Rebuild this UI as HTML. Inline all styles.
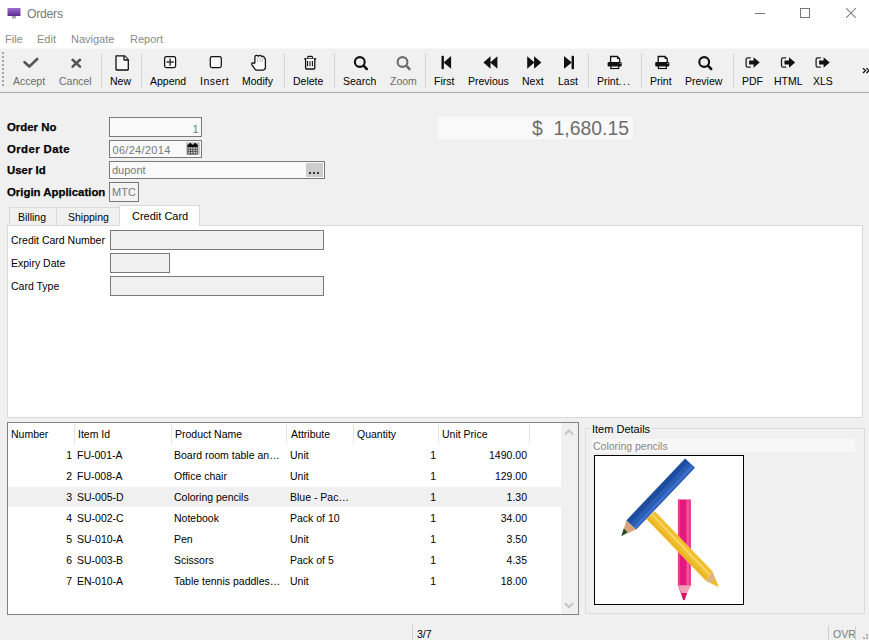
<!DOCTYPE html>
<html><head><meta charset="utf-8">
<style>
*{margin:0;padding:0;box-sizing:border-box}
html,body{width:869px;height:640px;overflow:hidden;background:#f0f0f0;font-family:"Liberation Sans",sans-serif;font-size:11px;color:#000}
.a{position:absolute;white-space:nowrap}
#title{position:absolute;left:0;top:0;width:869px;height:30px;background:#fff}
#menu{position:absolute;left:0;top:30px;width:869px;height:18px;background:#fff}
#tb{position:absolute;left:0;top:48px;width:869px;height:44px;background:#f0f0f0;border-top:1px solid #f8f8f8}
#tbline{position:absolute;left:0;top:92px;width:869px;height:1px;background:#a9a9a9}
.sep{position:absolute;top:53px;width:1px;height:35px;background:#d6d6d6}
.lbl{position:absolute;top:75px;font-size:10.5px;white-space:nowrap;color:#000}
.dis{color:#6d6d6d}
.ic{position:absolute}
.blbl{position:absolute;font-weight:bold;font-size:11.4px;white-space:nowrap;-webkit-text-stroke:0.25px #000}
.inp{position:absolute;background:#f9f9f9;border:1px solid #7a7a7a}
.gtext{color:#7a7a7a;font-size:11px;position:absolute;white-space:nowrap}
.hdr{position:absolute;top:428px;font-size:10.5px;white-space:nowrap}
.hsep{position:absolute;top:424px;width:1px;height:20px;background:#e5e5e5}
.cell{position:absolute;font-size:10.5px;white-space:nowrap}
</style></head><body>
<!-- title bar -->
<div id="title"></div>
<svg class="ic" style="left:7px;top:7px" width="14" height="12" viewBox="0 0 14 12">
<defs><linearGradient id="mon" x1="0" y1="0" x2="0" y2="1"><stop offset="0" stop-color="#9d6fd0"/><stop offset="1" stop-color="#5a2d8c"/></linearGradient></defs>
<rect x="0.5" y="1" width="13" height="8" fill="url(#mon)"/>
<rect x="5" y="9" width="4" height="2.5" fill="#a8a8a8"/>
</svg>
<div class="a" style="left:27px;top:7px;font-size:12.2px;letter-spacing:-0.25px;color:#7a7a7a">Orders</div>
<div class="a" style="left:755px;top:13px;width:10px;height:1px;background:#777"></div>
<div class="a" style="left:800px;top:8px;width:10px;height:10px;border:1px solid #777"></div>
<svg class="ic" style="left:846px;top:8px" width="10" height="10" viewBox="0 0 10 10"><path d="M0 0L10 10M10 0L0 10" stroke="#808080" stroke-width="1.1"/></svg>
<!-- menu -->
<div id="menu"></div>
<div class="a" style="left:5px;top:33px;font-size:11px;color:#8a8a8a">File</div>
<div class="a" style="left:37px;top:33px;font-size:11px;color:#8a8a8a">Edit</div>
<div class="a" style="left:71px;top:33px;font-size:11px;color:#8a8a8a">Navigate</div>
<div class="a" style="left:130px;top:33px;font-size:11px;color:#8a8a8a">Report</div>
<!-- toolbar -->
<div id="tb"></div>
<div id="tbline"></div>
<div class="a" style="left:2px;top:52px;width:2px;height:36px;background:repeating-linear-gradient(to bottom,#a8a8a8 0 2px,transparent 2px 4px)"></div>
<div class="sep" style="left:101px"></div>
<div class="sep" style="left:141px"></div>
<div class="sep" style="left:284px"></div>
<div class="sep" style="left:334px"></div>
<div class="sep" style="left:425px"></div>
<div class="sep" style="left:588px"></div>
<div class="sep" style="left:641px"></div>
<div class="sep" style="left:733px"></div>

<div class="lbl dis" style="left:13px">Accept</div>
<div class="lbl dis" style="left:59px">Cancel</div>
<div class="lbl" style="left:110px">New</div>
<div class="lbl" style="left:150px">Append</div>
<div class="lbl" style="left:200px;letter-spacing:0.5px">Insert</div>
<div class="lbl" style="left:242px">Modify</div>
<div class="lbl" style="left:293px">Delete</div>
<div class="lbl" style="left:343px">Search</div>
<div class="lbl dis" style="left:390px">Zoom</div>
<div class="lbl" style="left:434px">First</div>
<div class="lbl" style="left:468px">Previous</div>
<div class="lbl" style="left:522px">Next</div>
<div class="lbl" style="left:558px">Last</div>
<div class="lbl" style="left:597px">Print<span style="letter-spacing:1.3px">...</span></div>
<div class="lbl" style="left:650px">Print</div>
<div class="lbl" style="left:685px">Preview</div>
<div class="lbl" style="left:742px">PDF</div>
<div class="lbl" style="left:774px">HTML</div>
<div class="lbl" style="left:813px">XLS</div>

<!-- icons -->
<svg class="ic" style="left:0;top:0" width="869" height="100" viewBox="0 0 869 100">
<g fill="none" stroke-linecap="round" stroke-linejoin="round">
<path d="M24.6 62.2L29.3 66.6L37.2 59" stroke="#555" stroke-width="2.7"/>
<path d="M72.6 59.8L80 66.6M80 59.8L72.6 66.6" stroke="#555" stroke-width="2.6"/>
</g>
<path d="M116 55.8H124.4L128.3 59.7V69.6Q128.3 70 127.9 70H116.4Q116 70 116 69.6Z" fill="#f6f6f6" stroke="#111" stroke-width="1.3" stroke-linejoin="round"/>
<path d="M124 56V59.4Q124 60 124.6 60H128.2" fill="#fff" stroke="#111" stroke-width="1.3"/>
<rect x="164.6" y="56.6" width="11" height="11" rx="1.8" fill="#fafafa" stroke="#111" stroke-width="1.25"/>
<path d="M170.1 58.4V65.8M166.4 62.1H173.8" stroke="#333" stroke-width="1.5"/>
<rect x="210.3" y="56.6" width="11" height="11" rx="1.8" fill="#fafafa" stroke="#111" stroke-width="1.25"/>
<g transform="translate(248,52)">
<path d="M6.9 11V5.2Q6.9 3.4 8.6 3.4Q9.9 3.4 10.2 4.4Q10.6 3.3 11.9 3.3Q13.3 3.3 13.6 4.6Q14 4.2 14.8 4.2Q16.2 4.2 16.3 6Q17.4 6 17.4 7.5V15.6Q17.4 18 15 18H8.6Q7.6 18 7.1 17.3L3.8 12.6Q3.2 11.3 4.4 10.9Q5.7 10.6 6.9 11.8" fill="#fafafa" stroke="#111" stroke-width="1.25" stroke-linejoin="round"/>
<path d="M9.6 4.5V10M12 4.5V10M14.3 5.2V10" stroke="#bbb" stroke-width="0.9"/>
</g>
<g transform="translate(300,52)">
<rect x="7.6" y="4.4" width="5" height="2.2" rx="1.1" fill="none" stroke="#111" stroke-width="1.1"/>
<path d="M4.2 6.8H16.2" stroke="#111" stroke-width="1.4"/>
<path d="M5.6 6.8V16.2Q5.6 17 6.4 17H14Q14.8 17 14.8 16.2V6.8" fill="#fafafa" stroke="#111" stroke-width="1.3"/>
<path d="M7.6 9V14.3M12.4 9V14.3" stroke="#111" stroke-width="1.1"/>
<path d="M10 9V14.3" stroke="#555" stroke-width="1.4"/>
</g>
<g transform="translate(350,52)" fill="none" stroke="#111"><circle cx="9.8" cy="10" r="4.9" stroke-width="2.1"/><path d="M13.5 13.7L16.8 17" stroke-width="2.5" stroke-linecap="round"/></g>
<g transform="translate(392.7,52)" fill="none" stroke="#6d6d6d"><circle cx="9.8" cy="10" r="4.9" stroke-width="2.1"/><path d="M13.5 13.7L16.8 17" stroke-width="2.5" stroke-linecap="round"/></g>
<g transform="translate(694.4,52)" fill="none" stroke="#111"><circle cx="9.8" cy="10" r="4.9" stroke-width="2.1"/><path d="M13.5 13.7L16.8 17" stroke-width="2.5" stroke-linecap="round"/></g>
<g fill="#111">
<rect x="441.5" y="55.8" width="2.4" height="13.4" rx="0.8"/>
<path d="M443.6 62.4L451.1 56V68.8Z"/>
<path d="M483.4 62.4L490.5 56.2V68.8Z M490.2 62.4L497.4 56.2V68.8Z"/>
<path d="M527.2 56.2L534.4 62.4L527.2 68.8Z M534.1 56.2L541.4 62.4L534.1 68.8Z"/>
<path d="M564 56L571.8 62.4L564 68.8Z"/>
<rect x="571.6" y="55.8" width="2.4" height="13.4" rx="0.8"/>
</g>
<g transform="translate(603,52)">
<path d="M7.6 10.5V4.5H14.3L16.6 6.8V10.5" fill="#fafafa" stroke="#111" stroke-width="1.3"/>
<path d="M14 4.4V7.1H16.7Z" fill="#111"/>
<rect x="4.6" y="10.1" width="14.1" height="4.3" rx="1" fill="#111"/>
<circle cx="17.2" cy="11.4" r="0.6" fill="#bbb"/>
<rect x="7.8" y="13.9" width="7.9" height="2.6" fill="#fafafa" stroke="#111" stroke-width="1.2"/>
</g>
<g transform="translate(650.6,52)">
<path d="M7.6 10.5V4.5H14.3L16.6 6.8V10.5" fill="#fafafa" stroke="#111" stroke-width="1.3"/>
<path d="M14 4.4V7.1H16.7Z" fill="#111"/>
<rect x="4.6" y="10.1" width="14.1" height="4.3" rx="1" fill="#111"/>
<circle cx="17.2" cy="11.4" r="0.6" fill="#bbb"/>
<rect x="7.8" y="13.9" width="7.9" height="2.6" fill="#fafafa" stroke="#111" stroke-width="1.2"/>
</g>
<g id="exp" transform="translate(741,52)">
<path d="M9.8 5.8H6.8Q5.1 5.8 5.1 7.5V13.5Q5.1 15.2 6.8 15.2H9.8" fill="none" stroke="#222" stroke-width="1.3"/>
<path d="M8.1 8.4H12.6V5.2L18.7 10.4L12.6 15.8V12.5H8.1Z" fill="#111"/>
</g>
<g transform="translate(776.4,52)">
<path d="M9.8 5.8H6.8Q5.1 5.8 5.1 7.5V13.5Q5.1 15.2 6.8 15.2H9.8" fill="none" stroke="#222" stroke-width="1.3"/>
<path d="M8.1 8.4H12.6V5.2L18.7 10.4L12.6 15.8V12.5H8.1Z" fill="#111"/>
</g>
<g transform="translate(811,52)">
<path d="M9.8 5.8H6.8Q5.1 5.8 5.1 7.5V13.5Q5.1 15.2 6.8 15.2H9.8" fill="none" stroke="#222" stroke-width="1.3"/>
<path d="M8.1 8.4H12.6V5.2L18.7 10.4L12.6 15.8V12.5H8.1Z" fill="#111"/>
</g>
<path d="M863 68.3L865.5 70.6L863 72.9M866.5 68.3L869 70.6L866.5 72.9" fill="none" stroke="#111" stroke-width="1.3"/>
</svg>

<!-- form -->
<div class="blbl" style="left:7px;top:121px">Order No</div>
<div class="blbl" style="left:7px;top:142.6px;letter-spacing:0.4px">Order Date</div>
<div class="blbl" style="left:7px;top:164px">User Id</div>
<div class="blbl" style="left:7px;top:186px">Origin Application</div>

<div class="inp" style="left:109px;top:117px;width:93px;height:20px"></div>
<div class="gtext" style="left:192.5px;top:122.5px">1</div>
<div class="inp" style="left:109px;top:140px;width:93px;height:18px"></div>
<div class="gtext" style="left:112.5px;top:144px;letter-spacing:0.3px">06/24/2014</div>
<svg class="ic" style="left:183px;top:139px" width="20" height="20" viewBox="0 0 20 20">
<rect x="3.1" y="3.1" width="13.8" height="12.5" fill="#c6c6c6"/>
<rect x="4.5" y="5.8" width="10.3" height="9.6" rx="0.6" fill="#2e2e2e"/>
<rect x="4.5" y="5.6" width="10.3" height="2" fill="#000"/>
<circle cx="7.3" cy="5.2" r="1.2" fill="#000"/><circle cx="12.2" cy="5.2" r="1.2" fill="#000"/>
<rect x="5.4" y="8.3" width="1.7" height="1.7" fill="#cfcfcf"/><rect x="7.8" y="8.3" width="1.7" height="1.7" fill="#cfcfcf"/><rect x="10.2" y="8.3" width="1.7" height="1.7" fill="#cfcfcf"/><rect x="12.6" y="8.3" width="1.7" height="1.7" fill="#cfcfcf"/><rect x="5.4" y="10.6" width="1.7" height="1.7" fill="#cfcfcf"/><rect x="7.8" y="10.6" width="1.7" height="1.7" fill="#cfcfcf"/><rect x="10.2" y="10.6" width="1.7" height="1.7" fill="#cfcfcf"/><rect x="12.6" y="10.6" width="1.7" height="1.7" fill="#cfcfcf"/><rect x="5.4" y="12.9" width="1.7" height="1.7" fill="#cfcfcf"/><rect x="7.8" y="12.9" width="1.7" height="1.7" fill="#cfcfcf"/><rect x="10.2" y="12.9" width="1.7" height="1.7" fill="#cfcfcf"/><rect x="12.6" y="12.9" width="1.7" height="1.7" fill="#cfcfcf"/>
</svg>
<div class="inp" style="left:109px;top:161px;width:216px;height:18px"></div>
<div class="gtext" style="left:112px;top:164px">dupont</div>
<div class="a" style="left:306px;top:163px;width:17px;height:14px;background:#cdcdcd"></div>
<div class="a" style="left:309px;top:172px;width:2px;height:2px;background:#333;box-shadow:4px 0 #333,8px 0 #333"></div>
<div class="inp" style="left:109px;top:182px;width:30px;height:20px;background:#f3f3f3"></div>
<div class="gtext" style="left:112px;top:186px">MTC</div>

<div class="a" style="left:438px;top:117px;width:195px;height:22px;background:#f9f9f9"></div>
<div class="a" style="left:532px;top:116.7px;font-size:19.4px;color:#6d6d6d">$&nbsp; 1,680.15</div>

<!-- tabs -->
<div class="a" style="left:7px;top:225px;width:856px;height:193px;background:#fff;border:1px solid #d9d9d9"></div>
<div class="a" style="left:9px;top:207px;width:48px;height:18px;background:#f0f0f0;border:1px solid #d9d9d9;border-bottom:none"></div>
<div class="a" style="left:56px;top:207px;width:64px;height:18px;background:#f0f0f0;border:1px solid #d9d9d9;border-bottom:none"></div>
<div class="a" style="left:119px;top:205px;width:81px;height:21px;background:#fff;border:1px solid #d9d9d9;border-bottom:none"></div>
<div class="a" style="left:18px;top:211px;font-size:10.5px">Billing</div>
<div class="a" style="left:68px;top:211px;font-size:10.5px">Shipping</div>
<div class="a" style="left:132px;top:210px;font-size:11px">Credit Card</div>

<div class="a" style="left:11px;top:234px;font-size:10.5px">Credit Card Number</div>
<div class="a" style="left:11px;top:257px;font-size:10.5px">Expiry Date</div>
<div class="a" style="left:11px;top:280px;font-size:10.5px">Card Type</div>
<div class="inp" style="left:110px;top:230px;width:214px;height:20px;background:#f0f0f0"></div>
<div class="inp" style="left:110px;top:253px;width:60px;height:20px;background:#f0f0f0"></div>
<div class="inp" style="left:110px;top:276px;width:214px;height:20px;background:#f0f0f0"></div>

<!-- table -->
<div class="a" style="left:7px;top:422px;width:572px;height:193px;background:#fff;border:1px solid #828282"></div>
<div class="a" style="left:561px;top:423px;width:17px;height:191px;background:#f0f0f0"></div>
<svg class="ic" style="left:563px;top:427px" width="12" height="10" viewBox="0 0 12 10"><path d="M2 7.5L6 3.5L10 7.5" fill="none" stroke="#c4c4c4" stroke-width="2"/></svg>
<svg class="ic" style="left:563px;top:600px" width="12" height="10" viewBox="0 0 12 10"><path d="M2 3.2L6 7.2L10 3.2" fill="none" stroke="#c4c4c4" stroke-width="2"/></svg>
<div class="hsep" style="left:74px"></div>
<div class="hsep" style="left:171px"></div>
<div class="hsep" style="left:286px"></div>
<div class="hsep" style="left:353px"></div>
<div class="hsep" style="left:438px"></div>
<div class="hsep" style="left:529px"></div>
<div class="hdr" style="left:11px">Number</div>
<div class="hdr" style="left:78px">Item Id</div>
<div class="hdr" style="left:175px">Product Name</div>
<div class="hdr" style="left:291px">Attribute</div>
<div class="hdr" style="left:357px">Quantity</div>
<div class="hdr" style="left:442px">Unit Price</div>
<div class="a" style="left:8px;top:487px;width:553px;height:20px;background:#f0f0f0"></div>
<div class="cell" style="right:797px;top:449px">1</div>
<div class="cell" style="left:77px;top:449px">FU-001-A</div>
<div class="cell" style="left:174px;top:449px">Board room table an…</div>
<div class="cell" style="left:290px;top:449px">Unit</div>
<div class="cell" style="right:433px;top:449px">1</div>
<div class="cell" style="right:342px;top:449px">1490.00</div>
<div class="cell" style="right:797px;top:470px">2</div>
<div class="cell" style="left:77px;top:470px">FU-008-A</div>
<div class="cell" style="left:174px;top:470px">Office chair</div>
<div class="cell" style="left:290px;top:470px">Unit</div>
<div class="cell" style="right:433px;top:470px">1</div>
<div class="cell" style="right:342px;top:470px">129.00</div>
<div class="cell" style="right:797px;top:491px">3</div>
<div class="cell" style="left:77px;top:491px">SU-005-D</div>
<div class="cell" style="left:174px;top:491px">Coloring pencils</div>
<div class="cell" style="left:290px;top:491px">Blue - Pac…</div>
<div class="cell" style="right:433px;top:491px">1</div>
<div class="cell" style="right:342px;top:491px">1.30</div>
<div class="cell" style="right:797px;top:512px">4</div>
<div class="cell" style="left:77px;top:512px">SU-002-C</div>
<div class="cell" style="left:174px;top:512px">Notebook</div>
<div class="cell" style="left:290px;top:512px">Pack of 10</div>
<div class="cell" style="right:433px;top:512px">1</div>
<div class="cell" style="right:342px;top:512px">34.00</div>
<div class="cell" style="right:797px;top:533px">5</div>
<div class="cell" style="left:77px;top:533px">SU-010-A</div>
<div class="cell" style="left:174px;top:533px">Pen</div>
<div class="cell" style="left:290px;top:533px">Unit</div>
<div class="cell" style="right:433px;top:533px">1</div>
<div class="cell" style="right:342px;top:533px">3.50</div>
<div class="cell" style="right:797px;top:554px">6</div>
<div class="cell" style="left:77px;top:554px">SU-003-B</div>
<div class="cell" style="left:174px;top:554px">Scissors</div>
<div class="cell" style="left:290px;top:554px">Pack of 5</div>
<div class="cell" style="right:433px;top:554px">1</div>
<div class="cell" style="right:342px;top:554px">4.35</div>
<div class="cell" style="right:797px;top:575px">7</div>
<div class="cell" style="left:77px;top:575px">EN-010-A</div>
<div class="cell" style="left:174px;top:575px">Table tennis paddles…</div>
<div class="cell" style="left:290px;top:575px">Unit</div>
<div class="cell" style="right:433px;top:575px">1</div>
<div class="cell" style="right:342px;top:575px">18.00</div>

<!-- item details -->
<div class="a" style="left:585px;top:428px;width:280px;height:186px;border:1px solid #dcdcdc"></div>
<div class="a" style="left:590px;top:423px;padding:0 2px;background:#f0f0f0;font-size:11px">Item Details</div>
<div class="a" style="left:592px;top:439px;width:263px;height:13px;background:#f7f7f7"></div>
<div class="gtext" style="left:593px;top:440px;font-size:10.5px;color:#888">Coloring pencils</div>
<div class="a" style="left:594px;top:455px;width:150px;height:150px;background:#fff;border:1px solid #000;overflow:hidden">
<svg width="148" height="148" viewBox="1 1 148 148">
<!-- pink -->
<path d="M83.9 44.5H96.8V130.3L91 141.5Q89.5 145.5 88 141.5L83.9 130.3Z" fill="#e5197c"/>
<path d="M92.5 45H95.5V130H92.5Z" fill="#f2559c"/>
<path d="M84.2 44.8H86V130H84.2Z" fill="#ec3d8c"/>
<path d="M83.9 130.3H96.8L92.8 138.5H87.6Z" fill="#f0a3b8"/>
<path d="M87.5 138H93L91 144.5Q89.8 146 88.8 144.5Z" fill="#d81468"/>
<!-- yellow -->
<path d="M60.8 56.3L118.4 116.3L112 126.1L52.3 64Z" fill="#f1bf2e"/>
<path d="M58 59.5L116 120" stroke="#f7d560" stroke-width="2.2"/>
<path d="M54 63L113 124" stroke="#e9b020" stroke-width="1.5"/>
<path d="M118.4 116.3L124.7 131.7L112 126.1Z" fill="#e2b37c"/>
<path d="M121 124L124.7 131.7L117 128.5Z" fill="#eec020"/>
<!-- blue -->
<path d="M91.1 3.5L100.9 12.7L42.1 74.6L32.3 65.4Z" fill="#1e4c9f"/>
<path d="M94.5 7.5L99 11.5L41 72.5L36.5 68.5Z" fill="#2b5db5"/>
<path d="M98 10L100 12L41.6 74L39.6 72Z" fill="#3b70cc"/>
<path d="M32.3 65.4L42.1 74.6L27.5 81Z" fill="#d8a47c"/>
<path d="M29.8 73.5L33.5 77.3L27.3 81.3Z" fill="#1d4d25"/>
</svg>
</div>

<!-- status -->
<div class="a" style="left:412px;top:625px;width:1px;height:15px;background:#d0d0d0"></div>
<div class="a" style="left:417px;top:628px;font-size:10.5px">3/7</div>
<div class="a" style="left:828px;top:626px;width:1px;height:14px;background:#d0d0d0"></div>
<div class="a" style="left:833px;top:628px;font-size:10.5px;color:#7a7a7a">OVR</div>
<div class="a" style="left:855px;top:626px;width:1px;height:14px;background:#d0d0d0"></div>
<div class="a" style="left:866px;top:634px;width:2px;height:2px;background:#b0b0b0;box-shadow:0 3px #b0b0b0,-3px 3px #b0b0b0"></div>
</body></html>
